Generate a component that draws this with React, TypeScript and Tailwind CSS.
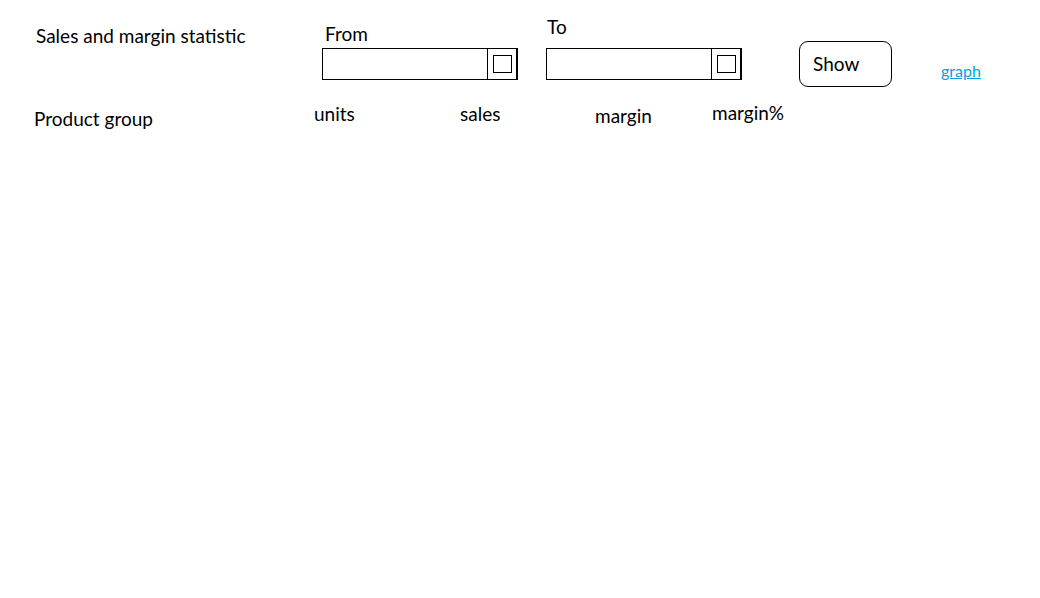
import React from "react";

const DateInput = () => (
  <div className="flex w-[196px] h-[32px] border border-black border-r-2">
    <div className="flex-1" />
    <div className="w-[29px] border-l border-black flex items-center justify-center">
      <div className="w-[19px] h-[18px] border border-black" />
    </div>
  </div>
);

export default function App() {
  return (
    <div className="w-[1040px] h-[598px] bg-white text-black font-['Lato',sans-serif] text-[19px] leading-[20px] pt-[17px]">
      <div className="flex items-start h-[86px] pl-[36px]">
        <div className="w-[286px] mt-[9px]">Sales and margin statistic</div>
        <div className="w-[224px] mt-[7px]">
          <div className="pl-[3px]">From</div>
          <div className="mt-[4px]">
            <DateInput />
          </div>
        </div>
        <div className="w-[253px]">
          <div className="pl-[1px]">To</div>
          <div className="mt-[11px]">
            <DateInput />
          </div>
        </div>
        <button className="w-[93px] h-[46px] mt-[24px] border border-black rounded-[9px] text-left pl-[13px]">
          Show
        </button>
        <a
          href="#"
          className="ml-[49px] mt-[44px] text-[16px] text-[#00a2e8] underline"
        >
          graph
        </a>
      </div>
      <div className="flex items-start pl-[34px]">
        <div className="w-[280px] mt-[6px]">Product group</div>
        <div className="w-[146px] mt-[1px]">units</div>
        <div className="w-[135px] mt-[1px]">sales</div>
        <div className="w-[117px] mt-[3px]">margin</div>
        <div>margin%</div>
      </div>
    </div>
  );
}
